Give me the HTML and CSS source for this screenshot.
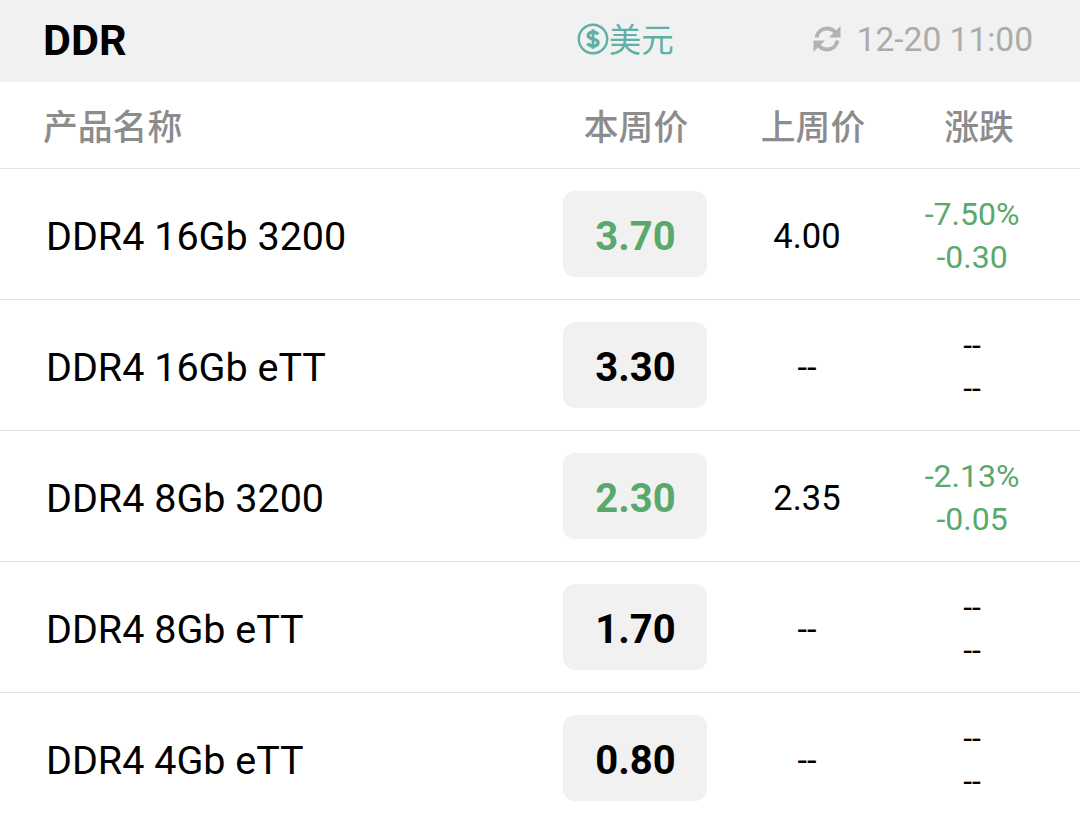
FILE: index.html
```html
<!DOCTYPE html>
<html lang="zh-CN">
<head>
<meta charset="utf-8">
<title>DDR</title>
<link rel="stylesheet" href="styles.css">
</head>
<body>
<header class="top">
  <h1 class="title">DDR</h1>
  <div class="currency">
    <svg class="dollar" viewBox="0 0 32 32" width="32" height="32" aria-hidden="true">
      <circle cx="16" cy="16" r="14.200" fill="none" stroke="#5fb0a6" stroke-width="2.400"/>
      <path d="M21 11.600c-.8-1.600-2.600-2.500-5-2.500-2.900 0-4.900 1.400-4.900 3.500 0 4.600 10 2.400 10 6.900 0 2.100-2.100 3.500-5 3.500-2.500 0-4.500-1-5.300-2.800" fill="none" stroke="#5fb0a6" stroke-width="3.400"/>
      <path d="M16 6.200v19.600" fill="none" stroke="#5fb0a6" stroke-width="2.800"/>
    </svg>
    <span class="currency-label">美元</span>
  </div>
  <div class="updated">
    <svg class="refresh" viewBox="0 0 28 28" width="28" height="28" aria-hidden="true">
      <path d="M3.500 12.500C4.500 7 8.800 3.600 14 3.600c3.400 0 6.200 1.500 8.200 3.900" fill="none" stroke="#b3b3b3" stroke-width="4"/>
      <path d="M24.500 15.500C23.500 21 19.200 24.400 14 24.400c-3.400 0-6.200-1.500-8.200-3.900" fill="none" stroke="#b3b3b3" stroke-width="4"/>
      <path d="M27.500 1V12.500H16z" fill="#b3b3b3"/>
      <path d="M.5 27V15.500H12z" fill="#b3b3b3"/>
    </svg>
    <span>12-20 11:00</span>
  </div>
</header>
<section class="table">
  <div class="head">
    <div class="head-name">产品名称</div>
    <div class="head-now">本周价</div>
    <div class="head-last">上周价</div>
    <div class="head-change">涨跌</div>
  </div>
  <div class="row">
    <div class="name">DDR4 16Gb 3200</div>
    <div class="pill down">3.70</div>
    <div class="last">4.00</div>
    <div class="change down"><span>-7.50%</span><span>-0.30</span></div>
  </div>
  <div class="row">
    <div class="name">DDR4 16Gb eTT</div>
    <div class="pill">3.30</div>
    <div class="last">--</div>
    <div class="change"><span>--</span><span>--</span></div>
  </div>
  <div class="row">
    <div class="name">DDR4 8Gb 3200</div>
    <div class="pill down">2.30</div>
    <div class="last">2.35</div>
    <div class="change down"><span>-2.13%</span><span>-0.05</span></div>
  </div>
  <div class="row">
    <div class="name">DDR4 8Gb eTT</div>
    <div class="pill">1.70</div>
    <div class="last">--</div>
    <div class="change"><span>--</span><span>--</span></div>
  </div>
  <div class="row">
    <div class="name">DDR4 4Gb eTT</div>
    <div class="pill">0.80</div>
    <div class="last">--</div>
    <div class="change"><span>--</span><span>--</span></div>
  </div>
</section>
</body>
</html>
```
FILE: styles.css
```css
* { box-sizing: border-box; }
html, body { margin: 0; padding: 0; }
body {
  width: 1080px;
  height: 816px;
  overflow: hidden;
  background: #fff;
  color: #000;
  font-family: Roboto, "Noto Sans CJK SC", sans-serif;
}
.top {
  height: 82px;
  background: #f1f1f1;
  display: flex;
  align-items: center;
  padding: 0 47px 4px 43px;
}
.title {
  margin: 0;
  flex: 1;
  font-size: 43px;
  font-weight: 700;
  line-height: 1;
  padding-top: 2px;
}
.currency {
  display: flex;
  align-items: center;
  width: 236px;
  color: #5fb0a6;
  font-size: 32.500px;
  font-family: "Noto Sans CJK SC", sans-serif;
}
.dollar { flex: none; }
.currency-label { line-height: 32px; padding-bottom: 2px; }
.updated {
  display: flex;
  align-items: center;
  gap: 16px;
  color: #ababab;
  font-size: 33.500px;
}
.refresh { flex: none; }
.head {
  height: 87px;
  display: flex;
  align-items: center;
  border-bottom: 1px solid #e4e4e4;
  color: #8c8c8c;
  font-size: 34.800px;
  font-weight: 500;
  font-family: "Noto Sans CJK SC", sans-serif;
  padding-left: 43px;
}
.head-name { width: 519px; flex: none; }
.head-now { width: 148px; flex: none; text-align: center; }
.head-last { width: 206px; flex: none; text-align: center; }
.head-change { width: 126px; flex: none; text-align: center; }
.row {
  height: 131px;
  display: flex;
  align-items: center;
  border-bottom: 1px solid #e4e4e4;
  padding: 0 43px 0 46px;
}
.row:last-child { border-bottom-color: transparent; }
.name { flex: 1; font-size: 39.500px; line-height: 46px; padding-top: 5px; }
.pill {
  width: 144px;
  height: 86px;
  flex: none;
  display: flex;
  align-items: center;
  justify-content: center;
  background: #f1f1f1;
  border-radius: 12px;
  font-size: 40px;
  font-weight: 700;
  padding: 5px 0 0 1px;
}
.last {
  width: 200px;
  flex: none;
  text-align: center;
  font-size: 34.500px;
  padding-top: 4px;
}
.change {
  width: 130px;
  flex: none;
  display: flex;
  flex-direction: column;
  align-items: center;
  font-size: 32px;
  line-height: 43px;
  padding-top: 4px;
}
.down { color: #5aa96c; }
```
